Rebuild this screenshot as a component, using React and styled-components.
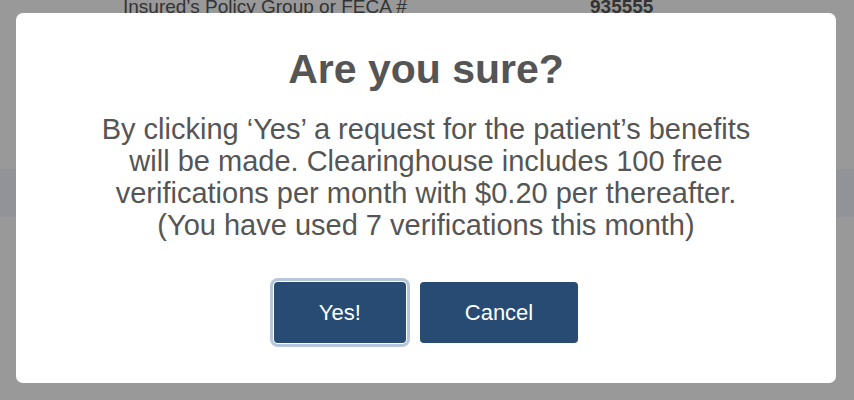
import styled, { createGlobalStyle } from "styled-components";

const GlobalStyle = createGlobalStyle`
    html, body {
        margin: 0;
        padding: 0;
        background: #ffffff;
        font-family: "Liberation Sans", Arial, Helvetica, sans-serif;
    }
`

export default function App() {
    return (
        <>
            <GlobalStyle />
            <Page>
                <InfoRow>
                    <InfoLabel>Insured’s Policy Group or FECA #</InfoLabel>
                    <InfoValue>935555</InfoValue>
                </InfoRow>
                <Spacer />
                <Band />
            </Page>

            <Overlay>
                <Modal role="dialog" aria-modal="true">
                    <Title>Are you sure?</Title>
                    <Message>
                        By clicking ‘Yes’ a request for the patient’s benefits<br />
                        will be made. Clearinghouse includes 100 free<br />
                        verifications per month with $0.20 per thereafter.<br />
                        (You have used 7 verifications this month)
                    </Message>
                    <Actions>
                        <Button focused>Yes!</Button>
                        <Button>Cancel</Button>
                    </Actions>
                </Modal>
            </Overlay>
        </>
    )
}

const Page = styled.div`
    display: flex;
    flex-direction: column;
    width: 854px;
    height: 400px;
    overflow: hidden;
`
const InfoRow = styled.div`
    display: flex;
    align-items: flex-end;
    height: 14px;
    padding-left: 123px;
    font-size: 19px;
    line-height: 14px;
    color: #555;
    overflow: hidden;
`
const InfoLabel = styled.span`
    width: 467px;
    white-space: nowrap;
`
const InfoValue = styled.span`
    font-weight: bold;
`
const Spacer = styled.div`
    height: 155px;
`
const Band = styled.div`
    height: 48px;
    background: #f2f5fd;
`
const Overlay = styled.div`
    position: fixed;
    inset: 0;
    background: rgba(0, 0, 0, 0.4);
    display: flex;
    align-items: flex-start;
    justify-content: flex-start;
    padding: 13px 0 0 16px;
`
const Modal = styled.div`
    width: 820px;
    height: 370px;
    box-sizing: border-box;
    background: #ffffff;
    border-radius: 7px;
    display: flex;
    flex-direction: column;
    align-items: center;
    padding-top: 32px;
    color: #555555;
`
const Title = styled.h2`
    margin: 0;
    font-size: 41px;
    line-height: 48px;
    font-weight: bold;
    color: #555555;
`
const Message = styled.p`
    margin: 20px 0 0;
    font-size: 29px;
    line-height: 32px;
    text-align: center;
`
const Actions = styled.div`
    display: flex;
    gap: 14px;
    margin-top: 41px;
`
const Button = styled.button`
    height: 61px;
    padding: 0 45px;
    border: none;
    border-radius: 4px;
    background: #274b72;
    color: #ffffff;
    font-family: "Liberation Sans", Arial, Helvetica, sans-serif;
    font-size: 22px;
    cursor: pointer;
    box-shadow: ${({ focused }) => focused ? "0 0 0 1px #ffffff, 0 0 0 4px #b7c6d9" : "none"};
`
